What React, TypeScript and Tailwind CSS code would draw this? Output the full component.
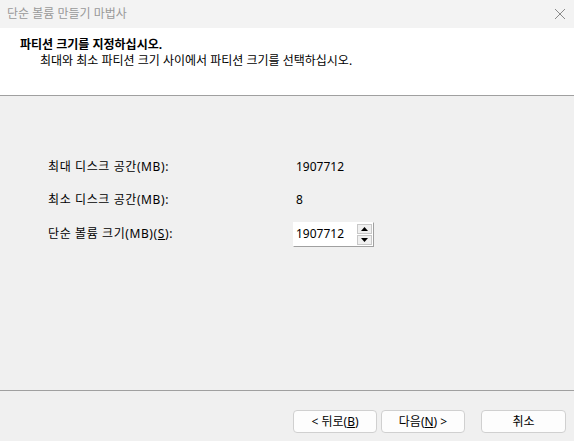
import React from "react";

const font = { fontFamily: '"Noto Sans", "Noto Sans CJK KR", sans-serif' };

function SpinBox() {
  return (
    <div className="flex h-[25px] w-[81px] border border-[#a0a0a0] border-l-white border-t-white bg-white">
      <div className="flex flex-1 items-center pl-[2px] text-[12px] text-black">1907712</div>
      <div className="flex w-[17px] flex-col gap-[1px] bg-white p-[1px]">
        <div className="flex flex-1 items-center justify-center border border-[#c8c8c8] bg-[#f0f0f0]">
          <svg width="7" height="4" viewBox="0 0 7 4">
            <path d="M3.5 0 L7 4 L0 4 Z" fill="#000" />
          </svg>
        </div>
        <div className="flex flex-1 items-center justify-center border border-[#c8c8c8] bg-[#f0f0f0]">
          <svg width="7" height="4" viewBox="0 0 7 4">
            <path d="M0 0 L7 0 L3.5 4 Z" fill="#000" />
          </svg>
        </div>
      </div>
    </div>
  );
}

function Button({ children, className = "" }: { children: React.ReactNode; className?: string }) {
  return (
    <button
      className={
        "flex h-[23px] w-[84px] items-center justify-center rounded-[4px] border border-[#d0d0d0] bg-[#fdfdfd] text-[12px] text-black " +
        className
      }
    >
      {children}
    </button>
  );
}

export default function App() {
  return (
    <div className="flex h-[441px] w-[574px] flex-col bg-[#f0f0f0]" style={font}>
      <div className="flex h-[28px] items-center justify-between bg-[#f3f3f3] pl-[7px] pr-[5px]">
        <span className="text-[12px] text-[#999999]">단순 볼륨 만들기 마법사</span>
        <svg width="12" height="12" viewBox="0 0 12 12" className="mr-[3px]">
          <path d="M1 1 L11 11 M11 1 L1 11" stroke="#8a8a8a" strokeWidth="1" />
        </svg>
      </div>

      <div className="flex h-[68px] flex-col border-b border-[#a0a0a0] bg-white pl-[20px] pt-[8px]">
        <span className="text-[12px] font-bold leading-[17px] text-black">파티션 크기를 지정하십시오.</span>
        <span className="pl-[20px] text-[12px] leading-[16px] text-black">
          최대와 최소 파티션 크기 사이에서 파티션 크기를 선택하십시오.
        </span>
      </div>

      <div className="flex flex-1 flex-col pl-[48px] pt-[58px] text-[12px] text-black">
        <div className="flex h-[26px] items-center">
          <span className="w-[248px] tracking-[0.6px]">최대 디스크 공간(MB):</span>
          <span>1907712</span>
        </div>
        <div className="mt-[7px] flex h-[26px] items-center">
          <span className="w-[248px] tracking-[0.6px]">최소 디스크 공간(MB):</span>
          <span>8</span>
        </div>
        <div className="mt-[8px] flex h-[26px] items-center">
          <span className="w-[245px] tracking-[0.6px]">
            단순 볼륨 크기(MB)(<span className="underline">S</span>):
          </span>
          <SpinBox />
        </div>
      </div>

      <div className="flex h-[51px] items-start border-t border-[#a0a0a0] pr-[8px] pt-[19px]">
        <div className="flex-1" />
        <Button>
          &lt; 뒤로(<span className="underline">B</span>)
        </Button>
        <Button className="ml-[4px]">
          다음(<span className="underline">N</span>) &gt;
        </Button>
        <Button className="ml-[16px] w-[85px]">취소</Button>
      </div>
    </div>
  );
}
